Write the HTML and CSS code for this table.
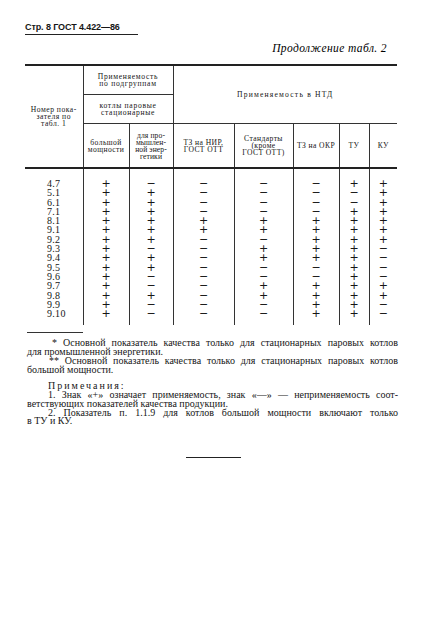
FILE: index.html
```html
<!DOCTYPE html>
<html lang="ru">
<head>
<meta charset="utf-8">
<title>ГОСТ 4.422—86, стр. 8</title>
<link rel="stylesheet" href="styles.css">
</head>
<body>
<div class="page">
  <div class="running-head">Стр. 8 ГОСТ 4.422—86</div>
  <div class="cont">Продолжение табл. 2</div>
  <table class="tbl">
    <colgroup>
      <col class="c-num"><col class="c-big"><col class="c-ind"><col class="c-nir"><col class="c-std"><col class="c-okr"><col class="c-tu"><col class="c-ku">
    </colgroup>
    <thead>
      <tr class="h1">
        <th class="num br" rowspan="3">Номер пока-<br>зателя по<br>табл. 1</th>
        <th class="br bb" colspan="2">Применяемость<br>по подгруппам</th>
        <th class="ntd bb" colspan="5" rowspan="2">Применяемость в НТД</th>
      </tr>
      <tr class="h2">
        <th class="br bb" colspan="2">котлы паровые<br>стационарные</th>
      </tr>
      <tr class="h3">
        <th class="br">большой<br>мощности</th>
        <th class="br narrow">для про-<br>мышлен-<br>ной энер-<br>гетики</th>
        <th class="br">ТЗ на НИР,<br>ГОСТ ОТТ</th>
        <th class="br">Стандарты<br>(кроме<br>ГОСТ ОТТ)</th>
        <th class="br">ТЗ на ОКР</th>
        <th class="br">ТУ</th>
        <th>КУ</th>
      </tr>
    </thead>
    <tbody>
      <tr><td class="lbl">4.7</td><td>+</td><td>−</td><td>−</td><td>−</td><td>−</td><td>+</td><td>+</td></tr>
      <tr><td class="lbl">5.1</td><td>+</td><td>+</td><td>−</td><td>−</td><td>−</td><td>−</td><td>+</td></tr>
      <tr><td class="lbl">6.1</td><td>+</td><td>+</td><td>−</td><td>−</td><td>−</td><td>−</td><td>+</td></tr>
      <tr><td class="lbl">7.1</td><td>+</td><td>+</td><td>−</td><td>−</td><td>−</td><td>+</td><td>+</td></tr>
      <tr><td class="lbl">8.1</td><td>+</td><td>+</td><td>+</td><td>+</td><td>+</td><td>+</td><td>+</td></tr>
      <tr><td class="lbl">9.1</td><td>+</td><td>+</td><td>+</td><td>+</td><td>+</td><td>+</td><td>+</td></tr>
      <tr><td class="lbl">9.2</td><td>+</td><td>+</td><td>−</td><td>−</td><td>+</td><td>+</td><td>+</td></tr>
      <tr><td class="lbl">9.3</td><td>+</td><td>−</td><td>−</td><td>+</td><td>+</td><td>+</td><td>−</td></tr>
      <tr><td class="lbl">9.4</td><td>+</td><td>+</td><td>−</td><td>+</td><td>+</td><td>+</td><td>−</td></tr>
      <tr><td class="lbl">9.5</td><td>+</td><td>+</td><td>−</td><td>−</td><td>−</td><td>+</td><td>−</td></tr>
      <tr><td class="lbl">9.6</td><td>+</td><td>−</td><td>−</td><td>−</td><td>−</td><td>+</td><td>−</td></tr>
      <tr><td class="lbl">9.7</td><td>+</td><td>−</td><td>−</td><td>+</td><td>+</td><td>+</td><td>+</td></tr>
      <tr><td class="lbl">9.8</td><td>+</td><td>+</td><td>−</td><td>+</td><td>+</td><td>+</td><td>+</td></tr>
      <tr><td class="lbl">9.9</td><td>+</td><td>−</td><td>−</td><td>−</td><td>+</td><td>+</td><td>−</td></tr>
      <tr><td class="lbl">9.10</td><td>+</td><td>−</td><td>−</td><td>−</td><td>+</td><td>+</td><td>−</td></tr>
    </tbody>
  </table>
  <div class="fn-rule"></div>
  <div class="notes">
    <p class="fn"><span class="line">* Основной показатель качества только для стационарных паровых котлов</span>для промышленной энергетики.</p>
    <p class="fn fn2"><span class="line">** Основной показатель качества только для стационарных паровых котлов</span>большой мощности.</p>
    <p class="ptitle">Примечания:</p>
    <p class="note"><span class="line">1. Знак «+» означает применяемость, знак «—» — неприменяемость соот-</span>ветствующих показателей качества продукции.</p>
    <p class="note"><span class="line">2. Показатель п. 1.1.9 для котлов большой мощности включают только</span>в ТУ и КУ.</p>
  </div>
  <div class="end-rule"></div>
</div>
</body>
</html>
```

FILE: styles.css
```css
html, body {
  margin: 0;
  padding: 0;
  background: #ffffff;
}

body {
  color: #161616;
  font-family: "Liberation Serif", "Times New Roman", serif;
}

.page {
  width: 372px;
  padding: 22px 0 0 25px;
}

.running-head {
  width: 113px;
  font: bold 9px/10px "Liberation Sans", Arial, sans-serif;
  letter-spacing: -0.1px;
  padding-bottom: 2px;
  border-bottom: 1.5px solid #222;
}

.cont {
  margin-top: 7px;
  padding-right: 10px;
  text-align: right;
  font-style: italic;
  font-size: 11.5px;
  line-height: 12px;
  letter-spacing: 0.4px;
  color: #000;
}

.tbl {
  margin-top: 10px;
  width: 372px;
  table-layout: fixed;
  border-collapse: collapse;
  border-top: 2px solid #222;
}

.c-num { width: 58px; }
.c-big { width: 46px; }
.c-ind { width: 44px; }
.c-nir { width: 61px; }
.c-std { width: 59px; }
.c-okr { width: 46px; }
.c-tu { width: 30px; }
.c-ku { width: 28px; }

.tbl th {
  padding: 0;
  font-weight: normal;
  font-size: 7.6px;
  line-height: 7px;
  letter-spacing: 0.7px;
  text-align: center;
  vertical-align: middle;
  white-space: nowrap;
}

.tbl .br { border-right: 1px solid #333; }
.tbl .bb { border-bottom: 1px solid #333; }

.tbl .h1 th { height: 28px; }
.tbl .h2 th { height: 28px; }
.tbl .h3 th {
  height: 43px;
  border-bottom: 2px solid #222;
  letter-spacing: 0.4px;
}
.tbl .h3 th.narrow { letter-spacing: 0.1px; }
.tbl th.num { border-bottom: 2px solid #222; letter-spacing: 0.5px; }
.tbl th.ntd { letter-spacing: 1.2px; }

.tbl td {
  padding: 0;
  height: 9.3px;
  text-align: center;
  font-family: "DejaVu Sans", sans-serif;
  font-size: 11px;
  line-height: 9.3px;
  border-right: 1px solid #333;
}
.tbl td:last-child { border-right: none; }

.tbl td.lbl {
  text-align: left;
  padding-left: 22px;
  font-family: "Liberation Serif", "Times New Roman", serif;
  font-size: 10px;
  letter-spacing: 0.3px;
}

.tbl tbody tr:first-child td { padding-top: 10px; }
.tbl tbody tr:last-child td { padding-bottom: 7px; }

.fn-rule {
  width: 56px;
  margin: 7px 0 0 2px;
  border-top: 1px solid #333;
}

.notes {
  width: 371px;
  margin: 6px 0 0 2px;
  font-size: 10px;
  line-height: 8.7px;
}

.notes p {
  margin: 0;
  text-align: justify;
}

.notes .line {
  display: block;
  text-align-last: justify;
}

.notes .fn .line { text-indent: 25px; }
.notes .fn2 .line { text-indent: 22px; }

.notes .ptitle {
  margin-top: 7px;
  padding-left: 21px;
  letter-spacing: 2px;
  line-height: 10px;
}

.notes .note .line { text-indent: 21px; }

.end-rule {
  width: 55px;
  margin: 31px 0 0 161px;
  border-top: 1.5px solid #222;
}
```
